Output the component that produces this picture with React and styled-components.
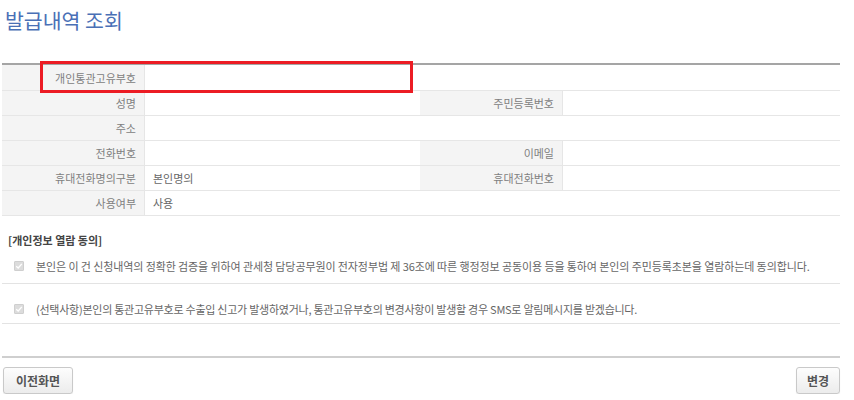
import React from 'react';
import styled, { createGlobalStyle } from 'styled-components';

const GlobalStyle = createGlobalStyle`
    * {
        box-sizing: border-box;
    }

    body {
        margin: 0;
        background: #fff;
        font-family: "Noto Sans CJK KR", "Noto Sans", sans-serif;
        color: #555;
    }
`;

const Page = styled.div`
    width: 854px;
    padding: 0 14px 0 2px;
`;

const Title = styled.h1`
    margin: 0;
    padding: 4px 0 0 3px;
    height: 63px;
    font-size: 20.5px;
    line-height: 32px;
    font-weight: 400;
    color: #4a70b6;
`;

const InfoTable = styled.div`
    position: relative;
    display: grid;
    grid-template-columns: 143px 275px 143px 1fr;
    border-top: 2px solid #a5a5a5;
`;

const Cell = styled.div`
    display: flex;
    align-items: center;
    justify-content: ${({ $label }) => ($label ? 'flex-end' : 'flex-start')};
    height: ${({ $tall }) => ($tall ? '26px' : '25px')};
    padding: 0 8px;
    font-size: 11px;
    color: ${({ $label }) => ($label ? '#808080' : '#666')};
    background: ${({ $label }) => ($label ? '#f4f4f4' : '#fff')};
    border-bottom: 1px solid #e6e6e6;
    border-right: ${({ $label }) => ($label ? '1px solid #e6e6e6' : 'none')};
    grid-column: ${({ $span }) => ($span ? `span ${$span}` : 'auto')};
`;

const Highlight = styled.div`
    position: absolute;
    left: 38px;
    top: -4px;
    width: 373px;
    height: 32px;
    border: 3px solid #ec1c24;
    pointer-events: none;
`;

const Consent = styled.section`
    margin-top: 14px;
`;

const ConsentTitle = styled.h2`
    margin: 0;
    padding-left: 6px;
    font-size: 11px;
    line-height: 20px;
    font-weight: 700;
    color: #444;
`;

const ConsentItem = styled.label`
    display: flex;
    align-items: center;
    gap: 12px;
    padding: ${({ $first }) => ($first ? '6px 0 8px 12px' : '16px 0 6px 12px')};
    min-height: ${({ $first }) => ($first ? '34px' : '40px')};
    font-size: 11px;
    letter-spacing: ${({ $first }) => ($first ? '-0.1px' : '-0.25px')};
    color: #666;
    border-bottom: 1px solid #e3e3e3;
`;

const Check = styled.span`
    display: inline-flex;
    align-items: center;
    justify-content: center;
    flex: none;
    width: 10px;
    height: 10px;
    background: #dcdcdc;
    border: 1px solid #cfcfcf;
    border-radius: 1px;
`;

const Footer = styled.div`
    display: flex;
    justify-content: space-between;
    align-items: center;
    margin-top: 32px;
    padding-top: 9px;
    border-top: 2px solid #cfcfcf;
`;

const Button = styled.button`
    height: 27px;
    padding: 0 ${({ $wide }) => ($wide ? '12px' : '10px')};
    margin-left: ${({ $wide }) => ($wide ? '1px' : '0')};
    font-family: "Noto Sans CJK KR", "Noto Sans", sans-serif;
    font-size: 12px;
    font-weight: 700;
    color: #555;
    background: linear-gradient(#fdfdfd, #ececec);
    border: 1px solid #c9c9c9;
    border-radius: 3px;
    box-shadow: 0 1px 1px rgba(0, 0, 0, 0.08);
`;

const CheckMark = () => (
    <svg width="8" height="8" viewBox="0 0 8 8">
        <path d="M1.2 4.2 L3.2 6 L6.8 1.8" fill="none" stroke="#fff" strokeWidth="1.3" />
    </svg>
);

const rows = [
    [{ label: '개인통관고유부호' }, { value: '', span: 3 }],
    [{ label: '성명' }, { value: '' }, { label: '주민등록번호' }, { value: '' }],
    [{ label: '주소' }, { value: '', span: 3 }],
    [{ label: '전화번호' }, { value: '' }, { label: '이메일' }, { value: '' }],
    [{ label: '휴대전화명의구분' }, { value: '본인명의' }, { label: '휴대전화번호' }, { value: '' }],
    [{ label: '사용여부' }, { value: '사용', span: 3 }],
];

const App = () => (
    <Page>
        <GlobalStyle />
        <Title>발급내역 조회</Title>
        <InfoTable>
            {rows.map((row, i) =>
                row.map((cell, j) => (
                    <Cell
                        key={`${i}-${j}`}
                        $label={cell.label !== undefined}
                        $span={cell.span}
                        $tall={i === 0}
                    >
                        {cell.label ?? cell.value}
                    </Cell>
                ))
            )}
            <Highlight />
        </InfoTable>
        <Consent>
            <ConsentTitle>[개인정보 열람 동의]</ConsentTitle>
            <ConsentItem $first>
                <Check>
                    <CheckMark />
                </Check>
                본인은 이 건 신청내역의 정확한 검증을 위하여 관세청 담당공무원이 전자정부법 제 36조에 따른 행정정보
                공동이용 등을 통하여 본인의 주민등록초본을 열람하는데 동의합니다.
            </ConsentItem>
            <ConsentItem>
                <Check>
                    <CheckMark />
                </Check>
                (선택사항)본인의 통관고유부호로 수출입 신고가 발생하였거나, 통관고유부호의 변경사항이 발생할 경우 SMS로
                알림메시지를 받겠습니다.
            </ConsentItem>
        </Consent>
        <Footer>
            <Button $wide>이전화면</Button>
            <Button>변경</Button>
        </Footer>
    </Page>
);

export default App;
